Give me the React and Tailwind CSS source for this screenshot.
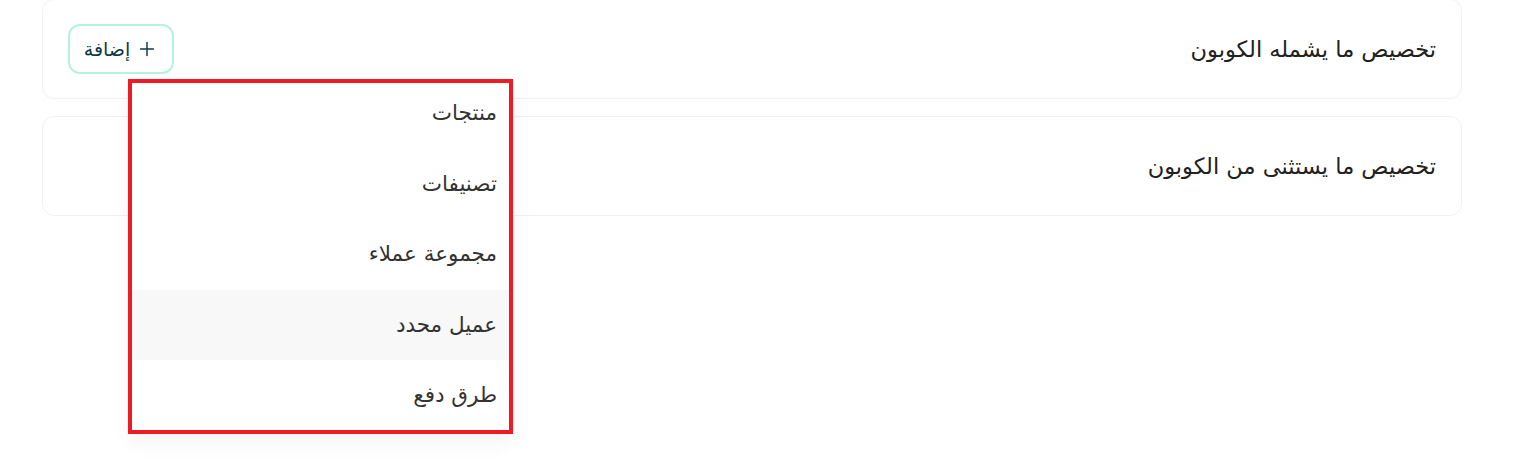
import React from 'react';
import { Plus } from 'lucide-react';

const menuItems = ['منتجات', 'تصنيفات', 'مجموعة عملاء', 'عميل محدد', 'طرق دفع'];

const SectionCard = ({ title, children }) => (
    <div className="h-[100px] rounded-xl border border-[#f1f1f1] bg-white flex items-center justify-between pr-[25px] pl-[25px]">
        <h3 className="text-[22.5px] text-[#222] leading-none">{title}</h3>
        {children}
    </div>
);

const App = () => {
    return (
        <div dir="rtl" className="relative w-[1523px] h-[473px] bg-white overflow-hidden" style={{ fontFamily: '"DejaVu Sans", sans-serif' }}>
            <div className="flex flex-col gap-[17px] mr-[61px] ml-[42px] -mt-[1px]">
                <SectionCard title="تخصيص ما يشمله الكوبون">
                    <button className="h-[50px] w-[106px] rounded-xl border-2 border-[#b4f3e2] flex items-center justify-center gap-[6px] text-[#0f3b45] text-[19px]">
                        <Plus size={22} strokeWidth={1.6} />
                        <span className="leading-none">إضافة</span>
                    </button>
                </SectionCard>
                <SectionCard title="تخصيص ما يستثنى من الكوبون" />
            </div>

            {/* dropdown menu */}
            <div className="absolute left-[128px] top-[79px] w-[385px] h-[355px] border-4 border-[#ed1c24] bg-white overflow-hidden shadow-[0_8px_20px_rgba(0,0,0,0.05)]">
                <ul className="-mt-[5px]">
                    {menuItems.map((item, i) => (
                        <li
                            key={item}
                            className={`h-[70.5px] flex items-center pr-[12px] text-[21.5px] text-[#333] ${i === 3 ? 'bg-[#f8f8f8]' : ''}`}
                        >
                            {item}
                        </li>
                    ))}
                </ul>
            </div>
        </div>
    );
};

export default App;
